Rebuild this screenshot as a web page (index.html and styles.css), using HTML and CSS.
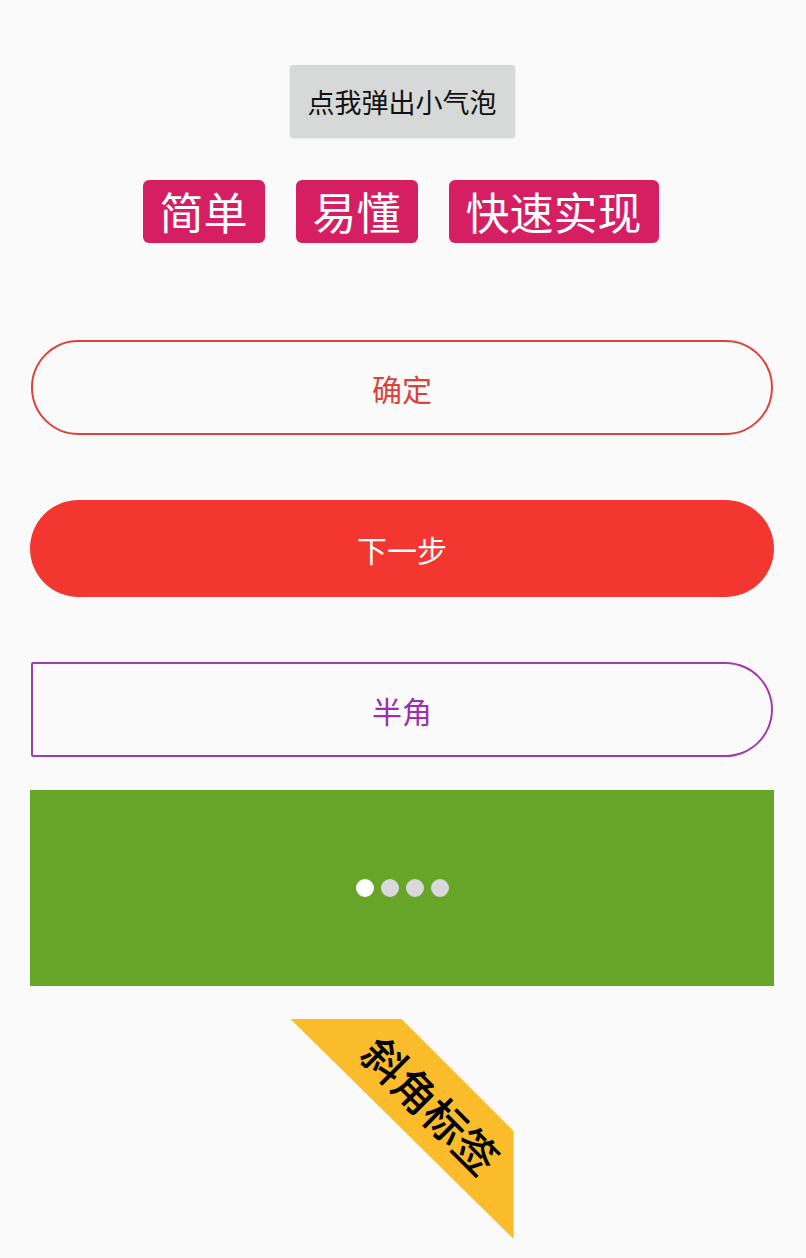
FILE: index.html
```html
<!DOCTYPE html>
<html lang="zh">
<head>
<meta charset="utf-8">
<link rel="stylesheet" href="styles.css">
</head>
<body>
<main class="page">
  <button class="bubble-btn">点我弹出小气泡</button>
  <div class="tags">
    <span class="tag">简单</span>
    <span class="tag">易懂</span>
    <span class="tag">快速实现</span>
  </div>
  <div class="btn btn-outline-red">确定</div>
  <div class="btn btn-fill-red">下一步</div>
  <div class="btn btn-half">半角</div>
  <div class="banner">
    <span class="dot dot-active"></span>
    <span class="dot"></span>
    <span class="dot"></span>
    <span class="dot"></span>
  </div>
  <div class="corner">
    <span class="corner-text">斜角标签</span>
  </div>
</main>
</body>
</html>
```

FILE: styles.css
```css
html, body {
  margin: 0;
  padding: 0;
  background: #fafafa;
}

body {
  font-family: "Noto Sans CJK SC", "Noto Sans", sans-serif;
  width: 806px;
  height: 1258px;
  overflow: hidden;
}

.page {
  display: flex;
  flex-direction: column;
  align-items: center;
  padding: 65px 32px 0 30px;
}

.bubble-btn {
  width: 225px;
  height: 72px;
  border: none;
  border-radius: 3px;
  background: #d7d8d8;
  box-shadow: 0 1px 2px rgba(0, 0, 0, 0.18);
  font-family: inherit;
  font-size: 27px;
  color: #111;
  padding: 0;
  display: flex;
  align-items: center;
  justify-content: center;
}

.tags {
  display: flex;
  gap: 31px;
  margin-top: 43px;
  margin-right: 3px;
}

.tag {
  height: 63px;
  padding: 0 17px;
  border-radius: 6px;
  background: #d61f63;
  color: #fff;
  font-size: 44px;
  line-height: 63px;
  display: flex;
  align-items: center;
}

.btn {
  box-sizing: border-box;
  width: 744px;
  display: flex;
  align-items: center;
  justify-content: center;
  font-size: 30px;
}

.btn-outline-red {
  margin-top: 97px;
  height: 95px;
  border: 2px solid #e2403a;
  border-radius: 48px;
  color: #e0403a;
  width: 742px;
}

.btn-fill-red {
  margin-top: 65px;
  height: 97px;
  border-radius: 49px;
  background: #f43630;
  color: #fff;
}

.btn-half {
  margin-top: 65px;
  height: 95px;
  border: 2px solid #a03cb0;
  border-radius: 2px 48px 48px 2px;
  color: #9c2fae;
  width: 742px;
}

.banner {
  margin-top: 33px;
  width: 744px;
  height: 196px;
  background: #67a528;
  display: flex;
  align-items: center;
  justify-content: center;
  gap: 7px;
}

.dot {
  width: 18px;
  height: 18px;
  border-radius: 50%;
  background: #d9d9db;
}

.dot-active {
  background: #ffffff;
}

.corner {
  margin-top: 33px;
  width: 223px;
  height: 220px;
  background: #fbbc2b;
  clip-path: polygon(0 0, 111px 0, 223px 112px, 223px 220px);
  display: flex;
  align-items: center;
  justify-content: center;
}

.corner-text {
  font-size: 43px;
  font-weight: 500;
  color: #000;
  white-space: nowrap;
  line-height: 1;
  transform: translate(30px, -25px) rotate(45deg);
}
```
